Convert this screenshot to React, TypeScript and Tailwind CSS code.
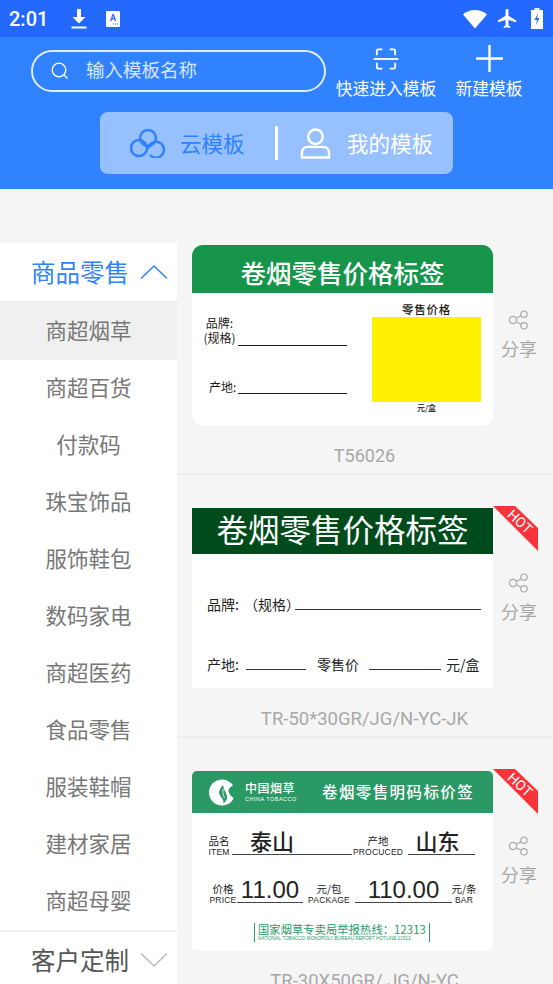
import React from 'react';

const cjk = "font-['Noto_Sans_CJK_SC','Noto_Sans',sans-serif]";

const categories = ['商超烟草', '商超百货', '付款码', '珠宝饰品', '服饰鞋包', '数码家电', '商超医药', '食品零售', '服装鞋帽', '建材家居', '商超母婴'];

const ShareIcon = () => (
  <svg width="22" height="20" viewBox="0 0 22 20" fill="none" stroke="#a8a8a8" strokeWidth="1.2">
    <circle cx="5" cy="10" r="3.6" />
    <circle cx="16" cy="4.2" r="3.2" />
    <circle cx="16" cy="15.8" r="3.2" />
    <path d="M8.2 8.3l4.9-2.6M8.2 11.7l4.9 2.6" />
  </svg>
);

const Hot = () => (
  <svg className="absolute left-[301px] top-[-2px]" width="45" height="45" viewBox="0 0 45 45">
    <polygon points="0,0 22,0 45,22 45,45" fill="#f9333a" />
    <text
      x="0"
      y="0"
      transform="translate(27 15.500) rotate(43)"
      textAnchor="middle"
      dominantBaseline="central"
      fill="#fff"
      fontSize="14"
      fontFamily="Roboto, sans-serif"
    >
      HOT
    </text>
  </svg>
);

const Share = ({ offset }: { offset: string }) => (
  <div className={`ml-[8px] flex w-[36px] flex-col items-center ${offset}`}>
    <ShareIcon />
    <span className={`mt-[5px] text-[18px] leading-[26px] whitespace-nowrap text-[#a8a8a8] ${cjk}`}>分享</span>
  </div>
);

const LabelOne = () => (
  <div className="h-[181px] w-[301px] overflow-hidden rounded-[11px] bg-white text-[#231815]">
    <div className={`flex h-[48px] items-center justify-center bg-[#16944a] pt-[6px] text-[25.500px] font-medium text-white ${cjk}`}>卷烟零售价格标签</div>
    <div className={`flex ${cjk}`}>
      <div className="w-[180px] pl-[9px]">
        <div className="flex h-[53px] items-end">
          <div className="w-[37px] pb-[1px] text-center text-[12px] leading-[15px]">
            <div>品牌:</div>
            <div className="whitespace-nowrap">(规格)</div>
          </div>
          <div className="h-[1px] w-[109px] bg-[#231815]" />
        </div>
        <div className="mt-[33px] flex items-end">
          <div className="w-[37px] pl-[8px] text-[12px] leading-[15px] whitespace-nowrap">产地:</div>
          <div className="h-[1px] w-[109px] bg-[#231815]" />
        </div>
      </div>
      <div className="flex w-[109px] flex-col items-center">
        <div className="mt-[8px] h-[16px] text-[11.500px] leading-[16px] font-medium tracking-[0.8px]">零售价格</div>
        <div className="h-[85px] w-[109px] bg-[#fff200]" />
        <div className="mt-[0px] text-[8px] leading-[12px] font-medium">元/盒</div>
      </div>
    </div>
  </div>
);

const LabelTwo = () => (
  <div className="h-[180px] w-[301px] bg-white text-[#222]">
    <div className={`flex h-[46px] items-center justify-center bg-[#004b1c] pb-[4px] text-[31.500px] text-white ${cjk}`}>卷烟零售价格标签</div>
    <div className={`pl-[15px] text-[14px] leading-[18px] ${cjk}`}>
      <div className="mt-[41px] flex items-end">
        <span className="w-[37px] whitespace-nowrap">品牌:</span>
        <span className="w-[51px] whitespace-nowrap">（规格）</span>
        <div className="mb-[3px] h-[1px] w-[186px] bg-[#333]" />
      </div>
      <div className="mt-[42px] flex items-end">
        <span className="w-[39px] whitespace-nowrap">产地:</span>
        <div className="mb-[3px] h-[1px] w-[60px] bg-[#333]" />
        <span className="ml-[11px] w-[41px] whitespace-nowrap">零售价</span>
        <div className="mb-[3px] ml-[11px] h-[1px] w-[72px] bg-[#333]" />
        <span className="ml-[5px] whitespace-nowrap">元/盒</span>
      </div>
    </div>
  </div>
);

const TobaccoLogo = () => (
  <svg width="27" height="27" viewBox="0 0 27 27">
    <circle cx="13" cy="13.500" r="13" fill="#fff" />
    <path d="M27 5.500L23 7Q18 10 20 14Q22 18 27 20Z" fill="#2a9966" />
    <path d="M14 6Q7 13 12.500 18.500Q15 21 14.500 24.500Q20 20 17 14Q14.500 10.500 14 6Z" fill="#2a9966" />
    <path d="M14 10Q13 15 15.500 19" stroke="#fff" strokeWidth="0.8" fill="none" />
  </svg>
);

const Field = ({ cn, en, width }: { cn: string; en: string; width: string }) => (
  <div className={`-mb-[2px] flex shrink-0 flex-col items-center leading-none ${width}`}>
    <span className={`text-[10.500px] leading-[12px] whitespace-nowrap ${cjk}`}>{cn}</span>
    <span className="text-[8.500px] leading-[10px] tracking-[0.2px] font-['Liberation_Sans',sans-serif] whitespace-nowrap">{en}</span>
  </div>
);

const LabelThree = () => (
  <div className="h-[180px] w-[301px] overflow-hidden rounded-[5px] bg-white text-[#222]">
    <div className="flex h-[42px] items-center bg-[#2a9966] pl-[17px] text-white">
      <TobaccoLogo />
      <div className="ml-[9px] w-[52px]">
        <div className={`text-[12px] leading-[14px] font-medium tracking-[0.5px] whitespace-nowrap ${cjk}`}>中国烟草</div>
        <div className="text-[5.500px] leading-[8px] tracking-[0.5px] whitespace-nowrap font-['Liberation_Sans',sans-serif]">CHINA TOBACCO</div>
      </div>
      <div className={`ml-[25px] text-[15.500px] font-medium tracking-[1.400px] whitespace-nowrap ${cjk}`}>卷烟零售明码标价签</div>
    </div>
    <div className="mt-[12px] flex items-end pl-[15px]">
      <Field cn="品名" en="ITEM" width="w-[24px]" />
      <div className="ml-[1px] flex h-[30px] w-[120px] justify-center border-b border-[#444] pr-[40px]">
        <span className={`text-[22px] leading-[30px] font-medium whitespace-nowrap ${cjk}`}>泰山</span>
      </div>
      <Field cn="产地" en="PROCUCED" width="w-[52px]" />
      <div className="ml-[4px] flex h-[30px] w-[67px] justify-center border-b border-[#444] pr-[8px]">
        <span className={`text-[22px] leading-[30px] font-medium whitespace-nowrap ${cjk}`}>山东</span>
      </div>
    </div>
    <div className="mt-[18px] flex items-end pl-[17px] font-['Liberation_Sans',sans-serif]">
      <Field cn="价格" en="PRICE" width="w-[28px]" />
      <div className="flex h-[30px] w-[66px] justify-center border-b border-[#444] text-[24px] leading-[34px]">11.00</div>
      <Field cn="元/包" en="PACKAGE" width="w-[44px] ml-[4px]" />
      <div className="ml-[4px] flex h-[30px] w-[97px] justify-center border-b border-[#444] text-[24px] leading-[34px]">110.00</div>
      <Field cn="元/条" en="BAR" width="w-[24px]" />
    </div>
    <div className="mt-[20px] flex justify-center pr-[1px]">
      <div className="flex h-[19px] w-[176px] flex-col items-start border-x border-[#2a9966] pl-[3px] text-[#2a9966]">
        <div className={`text-[11.200px] leading-[13px] whitespace-nowrap tracking-[0.15px] ${cjk}`}>国家烟草专卖局举报热线：12313</div>
        <div className="text-[4.700px] leading-[6px] whitespace-nowrap font-['Liberation_Sans',sans-serif]">NATIONAL TOBACCO MONOPOLY BUREAU REPORT HOTLINE:12313</div>
      </div>
    </div>
  </div>
);

const App: React.FC = () => {
  return (
    <div className={`h-[984px] w-[553px] overflow-hidden bg-[#f5f5f5] ${cjk}`}>
      {/* status bar */}
      <div className="flex h-[37px] items-center bg-[#2469ff] pl-[9px] pr-[10px] text-white">
        <span className="w-[60px] text-[20px] font-medium font-['Roboto',sans-serif]">2:01</span>
        <svg width="16" height="22" viewBox="0 0 16 22" fill="#fff" className="ml-[2px]">
          <path d="M6 1h4v8h4.5L8 15.5 1.500 9H6z" />
          <rect x="0.500" y="18.500" width="15" height="2" />
        </svg>
        <svg width="14" height="16" viewBox="0 0 14 16" className="ml-[19px]">
          <rect width="14" height="16" rx="1" fill="#fff" />
          <text x="7" y="10" textAnchor="middle" fontSize="9" fontWeight="700" fill="#2469ff" fontFamily="Roboto, sans-serif">A</text>
          <path d="M7 13h5" stroke="#2469ff" strokeDasharray="1 1" />
        </svg>
        <div className="flex-1" />
        <svg width="24" height="20" viewBox="0 0 24 20" fill="#fff">
          <path d="M0 5.500C3 2.500 7.500 1 12 1s9 1.500 12 4.500L12 19.500z" />
        </svg>
        <svg width="23" height="23" viewBox="0 0 24 24" fill="#fff" className="ml-[9px]">
          <path d="M21 16v-2l-8-5V3.500a1.500 1.500 0 0 0-3 0V9l-8 5v2l8-2.500V19l-2 1.500V22l3.500-1 3.500 1v-1.500L13 19v-5.500z" />
        </svg>
        <svg width="12" height="21" viewBox="0 0 12 21" className="ml-[12px]">
          <path d="M3.500 0h5v2H12v19H0V2h3.500z" fill="#fff" />
          <path d="M7 5L3.500 12H6l-1 5 3.500-7H6z" fill="#2469ff" />
        </svg>
      </div>

      {/* header */}
      <div className="h-[152px] bg-[#3082ff] text-white">
        <div className="flex pl-[31px] pt-[6px]">
          <div className="mt-[7px] flex h-[42px] w-[295px] items-center rounded-full border-2 border-white/85 pl-[17px]">
            <svg width="20" height="20" viewBox="0 0 20 20" fill="none" stroke="#fff" strokeWidth="1.300">
              <circle cx="9" cy="9" r="6.800" />
              <path d="M14 14l3.500 3.500" />
            </svg>
            <span className="ml-[16px] pb-[2px] text-[18.500px] text-white/80">输入模板名称</span>
          </div>
          <div className="ml-[9px] flex w-[102px] flex-col items-center">
            <svg width="28" height="22" viewBox="0 0 28 24" fill="none" stroke="#fff" strokeWidth="2" className="mt-[5px]">
              <path d="M4 8V3q0-1.500 1.500-1.500H10M18 1.500h4.500Q24 1.500 24 3v5M4 16v5q0 1.500 1.500 1.500H10M18 22.500h4.500Q24 22.500 24 21v-5" />
              <path d="M0.500 12h27" />
            </svg>
            <span className="mt-[6px] text-[16.800px] leading-[24px] whitespace-nowrap">快速进入模板</span>
          </div>
          <div className="ml-[18px] flex w-[68px] flex-col items-center">
            <svg width="27" height="27" viewBox="0 0 28 28" stroke="#fff" strokeWidth="2.500" className="mt-[2px]">
              <path d="M14 0v28M0 14h28" />
            </svg>
            <span className="mt-[4px] text-[16.800px] leading-[24px] whitespace-nowrap">新建模板</span>
          </div>
        </div>
        <div className="ml-[100px] mt-[12px] flex h-[62px] w-[353px] items-center rounded-[8px] bg-[#97c0ff]">
          <svg width="36" height="30" viewBox="0 0 36 30" fill="none" stroke="#3082ff" strokeWidth="2.500" className="ml-[30px]">
            <circle cx="18" cy="10" r="8" />
            <circle cx="9" cy="20" r="8" />
            <path d="M20 27a8 8 0 1 0-2-6" />
          </svg>
          <span className="ml-[14px] w-[64px] text-[21.500px] text-[#3082ff] whitespace-nowrap">云模板</span>
          <div className="ml-[31px] h-[34px] w-[3px] bg-white" />
          <svg width="31" height="31" viewBox="0 0 32 32" fill="none" stroke="#fff" strokeWidth="2.500" className="ml-[22px]">
            <circle cx="16" cy="9" r="7.500" />
            <path d="M2 30.500V26q0-6.500 6.500-6.500h15Q30 19.500 30 26v4.500z" />
          </svg>
          <span className="ml-[16px] text-[21.500px] whitespace-nowrap">我的模板</span>
        </div>
      </div>

      {/* body */}
      <div className="flex">
        <div className="mt-[54px] w-[177px] shrink-0 bg-white">
          <div className="flex h-[60px] items-center border-b-2 border-[#eee] pl-[31px]">
            <span className="text-[24.500px] leading-none text-[#3082ff]">商品零售</span>
            <svg width="28" height="16" viewBox="0 0 28 16" fill="none" stroke="#3082ff" strokeWidth="1.600" className="ml-[11px]">
              <path d="M1 14.500L14 2l13 12.500" />
            </svg>
          </div>
          {categories.map((name, i) => (
            <div key={name} className={`flex h-[57px] items-center justify-center pb-[2px] text-[21.500px] text-[#777] ${i === 0 ? 'bg-[#f0f0f0]' : ''}`}>
              {name}
            </div>
          ))}
          <div className="flex h-[60px] items-center border-t-2 border-[#eee] pb-[2px] pl-[31px]">
            <span className="text-[24.500px] leading-none text-[#555]">客户定制</span>
            <svg width="28" height="16" viewBox="0 0 28 16" fill="none" stroke="#bbb" strokeWidth="1.600" className="ml-[11px]">
              <path d="M1 1.500L14 14 27 1.500" />
            </svg>
          </div>
        </div>

        <div className="min-w-0 flex-1 pt-[56px]">
          <div className="h-[230px] border-b-2 border-[#eee] pl-[15px]">
            <div className="flex items-start">
              <LabelOne />
              <Share offset="mt-[65px]" />
            </div>
            <div className="mt-[18px] w-[345px] text-center text-[18px] leading-[24px] text-[#a8a8a8] font-['Roboto',sans-serif]">T56026</div>
          </div>
          <div className="h-[263px] border-b-2 border-[#eee] pl-[15px] pt-[33px]">
            <div className="relative flex items-start">
              <LabelTwo />
              <Hot />
              <Share offset="mt-[65px]" />
            </div>
            <div className="mt-[19px] w-[345px] text-center text-[18.500px] leading-[24px] text-[#a8a8a8] font-['Roboto',sans-serif]">TR-50*30GR/JG/N-YC-JK</div>
          </div>
          <div className="pl-[15px] pt-[33px]">
            <div className="relative flex items-start">
              <LabelThree />
              <Hot />
              <Share offset="mt-[65px]" />
            </div>
            <div className="mt-[18px] w-[345px] text-center text-[18.500px] leading-[24px] text-[#a8a8a8] font-['Roboto',sans-serif]">TR-30X50GR/ JG/N-YC</div>
          </div>
        </div>
      </div>
    </div>
  );
};

export default App;
